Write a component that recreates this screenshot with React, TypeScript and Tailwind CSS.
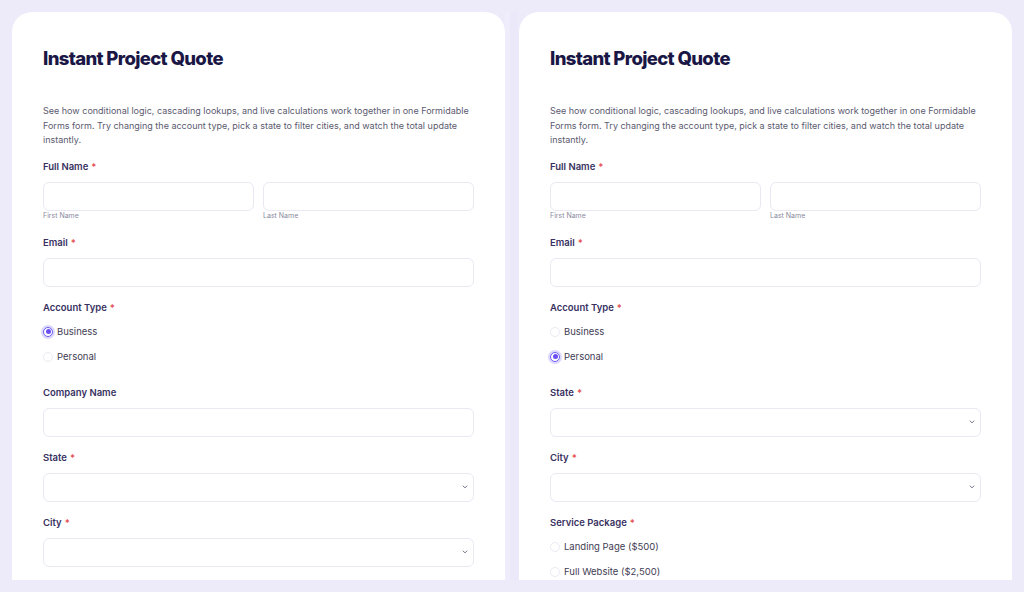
import React from "react";

const font = { fontFamily: "Inter, 'Noto Sans', sans-serif" };

const Req = () => <span className="ml-[3px] text-[#e5484d]">*</span>;

const Label = ({ text, required, className = "" }: { text: string; required?: boolean; className?: string }) => (
  <div className={`h-[12px] text-[9.5px] leading-[12px] font-semibold text-[#38315f] ${className}`}>
    {text}
    {required && <Req />}
  </div>
);

const Input = ({ className = "" }: { className?: string }) => (
  <div className={`h-[29px] rounded-[6px] border border-[#eae8f3] bg-white ${className}`} />
);

const Select = ({ className = "" }: { className?: string }) => (
  <div className={`h-[29px] rounded-[6px] border border-[#eae8f3] bg-white flex items-center justify-end pr-[5px] ${className}`}>
    <svg width="6" height="4" viewBox="0 0 6 4" fill="none">
      <path d="M1 1l2 1.8L5 1" stroke="#7d7c92" strokeWidth="1" strokeLinecap="round" strokeLinejoin="round" />
    </svg>
  </div>
);

const Radio = ({ label, checked, className = "" }: { label: string; checked?: boolean; className?: string }) => (
  <div className={`h-[14px] flex items-center gap-[4px] ${className}`}>
    {checked ? (
      <span className="w-[10px] h-[10px] rounded-full border border-[#6c5ef5] bg-white flex items-center justify-center shadow-[0_0_0_2px_#dcd8fd]">
        <span className="w-[5px] h-[5px] rounded-full bg-[#6c4ef5]" />
      </span>
    ) : (
      <span className="w-[10px] h-[10px] rounded-full border border-[#eceaf3] bg-white" />
    )}
    <span className="text-[9.5px] leading-[14px] text-[#3f3d55]">{label}</span>
  </div>
);

const Field = ({ label, required, select, className = "" }: { label: string; required?: boolean; select?: boolean; className?: string }) => (
  <div className={className}>
    <Label text={label} required={required} />
    {select ? <Select className="mt-[9px]" /> : <Input className="mt-[9px]" />}
  </div>
);

const Header = () => (
  <>
    <h1 className="h-[22px] text-[18.5px] leading-[22px] font-extrabold tracking-[-0.035em] text-[#1a1645]">
      Instant Project Quote
    </h1>
    <p className="mt-[35px] text-[9px] leading-[14.5px] text-[#5b5a70]">
      See how conditional logic, cascading lookups, and live calculations work together in one Formidable Forms
      form. Try changing the account type, pick a state to filter cities, and watch the total update instantly.
    </p>
    <Label text="Full Name" required className="mt-[13px]" />
    <div className="mt-[9px] grid grid-cols-2 gap-[9px]">
      <div>
        <Input />
        <div className="h-[10px] text-[7px] leading-[10px] text-[#8b8a9e]">First Name</div>
      </div>
      <div>
        <Input />
        <div className="h-[10px] text-[7px] leading-[10px] text-[#8b8a9e]">Last Name</div>
      </div>
    </div>
    <Field label="Email" required className="mt-[16px]" />
    <Label text="Account Type" required className="mt-[15px]" />
  </>
);

const Card = ({ children }: { children: React.ReactNode }) => (
  <div className="w-[493px] h-[568px] overflow-hidden rounded-t-[20px] bg-white px-[31px] pt-[35px] flex flex-col">
    {children}
  </div>
);

export default function App() {
  return (
    <div style={font} className="w-[1024px] h-[592px] bg-[#edeafa] pt-[12px] pl-[12px] flex items-start overflow-hidden">
      <Card>
        <Header />
        <Radio label="Business" checked className="mt-[11px]" />
        <Radio label="Personal" className="mt-[11px]" />
        <Field label="Company Name" className="mt-[23px]" />
        <Field label="State" required select className="mt-[15px]" />
        <Field label="City" required select className="mt-[15px]" />
      </Card>
      <div className="w-[14px] h-[568px] flex">
        <div className="w-[5px] bg-[#efedfb]" />
        <div className="w-[8px] bg-[#ebe8f9]" />
      </div>
      <Card>
        <Header />
        <Radio label="Business" className="mt-[11px]" />
        <Radio label="Personal" checked className="mt-[11px]" />
        <Field label="State" required select className="mt-[23px]" />
        <Field label="City" required select className="mt-[15px]" />
        <Label text="Service Package" required className="mt-[15px]" />
        <Radio label="Landing Page ($500)" className="mt-[11px]" />
        <Radio label="Full Website ($2,500)" className="mt-[11px]" />
      </Card>
    </div>
  );
}
